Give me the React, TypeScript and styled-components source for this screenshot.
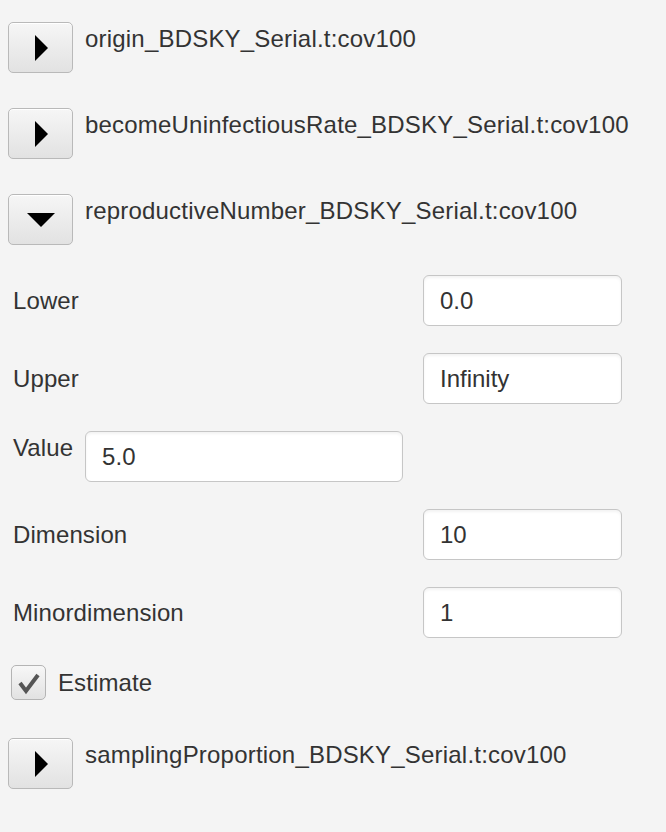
import React from "react";
import styled, { createGlobalStyle } from "styled-components";

const Global = createGlobalStyle`
  html, body { margin: 0; padding: 0; background: #f4f4f4; }
  body { font-family: "Liberation Sans", Arial, sans-serif; color: #333; }
`;

const Page = styled.div`
  width: 666px;
  height: 832px;
  box-sizing: border-box;
  padding: 22px 0 0 8px;
  display: flex;
  flex-direction: column;
  background: #f4f4f4;
  overflow: hidden;
`;

const ExpanderRow = styled.div<{ $mb: number }>`
  display: flex;
  align-items: flex-start;
  gap: 12px;
  margin-bottom: ${(p) => p.$mb}px;
`;

const ToggleButton = styled.button`
  width: 65px;
  height: 51px;
  flex: none;
  box-sizing: border-box;
  border: 1px solid #b9b9b9;
  border-radius: 5px;
  background: linear-gradient(#f6f6f6, #e2e2e2);
  box-shadow: inset 0 1px 0 #fff;
  display: flex;
  align-items: center;
  justify-content: center;
  padding: 0;
`;

const ExpanderTitle = styled.span`
  font-size: 24px;
  line-height: 28px;
  padding-top: 3px;
  color: #333;
  letter-spacing: 0.2px;
`;

const FieldRow = styled.div<{ $mb: number }>`
  display: flex;
  align-items: center;
  justify-content: space-between;
  width: 614px;
  padding-left: 5px;
  box-sizing: border-box;
  margin-bottom: ${(p) => p.$mb}px;
`;

const InlineRow = styled.div<{ $mb: number }>`
  display: flex;
  align-items: flex-start;
  gap: 12px;
  padding-left: 5px;
  margin-bottom: ${(p) => p.$mb}px;
`;

const Label = styled.span<{ $pt?: number }>`
  font-size: 24px;
  line-height: 28px;
  color: #333;
  padding-top: ${(p) => p.$pt ?? 0}px;
  letter-spacing: 0.1px;
`;

const Field = styled.div<{ $w: number }>`
  width: ${(p) => p.$w}px;
  height: 51px;
  box-sizing: border-box;
  border: 1.5px solid #c6c6c6;
  border-radius: 6px;
  background: #fff;
  box-shadow: inset 0 2px 3px rgba(0, 0, 0, 0.05);
  display: flex;
  align-items: center;
  padding-left: 16px;
  font-size: 24px;
  color: #333;
`;

const CheckRow = styled.label`
  display: flex;
  align-items: center;
  gap: 12px;
  padding-left: 3px;
  margin-bottom: 38px;
`;

const CheckBox = styled.span`
  width: 35px;
  height: 35px;
  box-sizing: border-box;
  border: 1.5px solid #b4b4b4;
  border-radius: 5px;
  background: linear-gradient(#f7f7f7, #e2e2e2);
  display: flex;
  align-items: center;
  justify-content: center;
`;

const RightArrow = () => (
  <svg width="16" height="28" viewBox="0 0 16 28">
    <polygon points="2,1 15,14 2,27" fill="#000" />
  </svg>
);

const DownArrow = () => (
  <svg width="30" height="16" viewBox="0 0 30 16">
    <polygon points="1,1 29,1 15,15" fill="#000" />
  </svg>
);

const Check = () => (
  <svg width="30" height="30" viewBox="0 0 30 30">
    <polyline
      points="6,15 12,23 24,7"
      fill="none"
      stroke="#555"
      strokeWidth="4"
      strokeLinejoin="miter"
    />
  </svg>
);

export default function App() {
  return (
    <>
      <Global />
      <Page>
        <ExpanderRow $mb={35}>
          <ToggleButton>
            <RightArrow />
          </ToggleButton>
          <ExpanderTitle>origin_BDSKY_Serial.t:cov100</ExpanderTitle>
        </ExpanderRow>
        <ExpanderRow $mb={35}>
          <ToggleButton>
            <RightArrow />
          </ToggleButton>
          <ExpanderTitle>becomeUninfectiousRate_BDSKY_Serial.t:cov100</ExpanderTitle>
        </ExpanderRow>
        <ExpanderRow $mb={30}>
          <ToggleButton>
            <DownArrow />
          </ToggleButton>
          <ExpanderTitle>reproductiveNumber_BDSKY_Serial.t:cov100</ExpanderTitle>
        </ExpanderRow>

        <FieldRow $mb={27}>
          <Label>Lower</Label>
          <Field $w={199}>0.0</Field>
        </FieldRow>
        <FieldRow $mb={27}>
          <Label>Upper</Label>
          <Field $w={199}>Infinity</Field>
        </FieldRow>
        <InlineRow $mb={27}>
          <Label $pt={3}>Value</Label>
          <Field $w={318}>5.0</Field>
        </InlineRow>
        <FieldRow $mb={27}>
          <Label>Dimension</Label>
          <Field $w={199}>10</Field>
        </FieldRow>
        <FieldRow $mb={27}>
          <Label>Minordimension</Label>
          <Field $w={199}>1</Field>
        </FieldRow>

        <CheckRow>
          <CheckBox>
            <Check />
          </CheckBox>
          <Label>Estimate</Label>
        </CheckRow>

        <ExpanderRow $mb={0}>
          <ToggleButton>
            <RightArrow />
          </ToggleButton>
          <ExpanderTitle>samplingProportion_BDSKY_Serial.t:cov100</ExpanderTitle>
        </ExpanderRow>
      </Page>
    </>
  );
}
